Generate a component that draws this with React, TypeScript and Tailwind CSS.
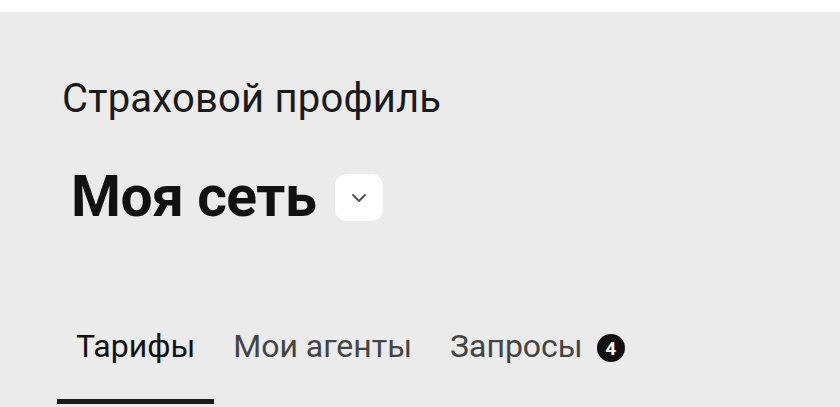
import React from 'react';

const tabs = [
  { label: 'Тарифы', active: true },
  { label: 'Мои агенты' },
  { label: 'Запросы', badge: 4 },
];

const ChevronDown: React.FC = () => (
  <svg width="16" height="10" viewBox="0 0 16 10" fill="none">
    <path d="M2 2l6 6 6-6" stroke="#4b4b4b" strokeWidth="1.8" strokeLinecap="round" strokeLinejoin="round" />
  </svg>
);

const App: React.FC = () => {
  return (
    <div className="w-[840px] h-[407px] overflow-hidden bg-white flex flex-col font-['Roboto',sans-serif]">
      <div className="h-[12px] shrink-0 bg-white" />
      <div className="flex-1 bg-[#ebebeb] flex flex-col pt-[63px]">
        <div className="pl-[62px] text-[40px] leading-[48px] tracking-[0.2px] text-[#1a1a1a]">Страховой профиль</div>

        <div className="mt-[45px] pl-[71px] flex items-start h-[57px]">
          <h1 className="text-[57px] leading-[57px] font-bold tracking-[-0.5px] text-[#111]">Моя сеть</h1>
          <button className="ml-[19px] mt-[6px] w-[48px] h-[47px] rounded-[12px] bg-white flex items-center justify-center">
            <ChevronDown />
          </button>
        </div>

        <div className="mt-[101px] pl-[57px] flex">
          {tabs.map((t) => (
            <div key={t.label} className="flex flex-col">
              <div
                className={`px-[19px] h-[73px] flex items-start text-[32px] leading-[40px] ${
                  t.active ? 'text-[#111]' : 'text-[#444]'
                }`}
              >
                <span>{t.label}</span>
                {t.badge !== undefined && (
                  <span className="ml-[14px] mt-[8px] w-[28px] h-[28px] rounded-full bg-[#111] text-white text-[19px] font-bold flex items-center justify-center leading-none">
                    {t.badge}
                  </span>
                )}
              </div>
              <div className={`h-[5px] ${t.active ? 'bg-[#1a1a1a]' : 'bg-transparent'}`} />
            </div>
          ))}
        </div>
      </div>
    </div>
  );
};

export default App;
